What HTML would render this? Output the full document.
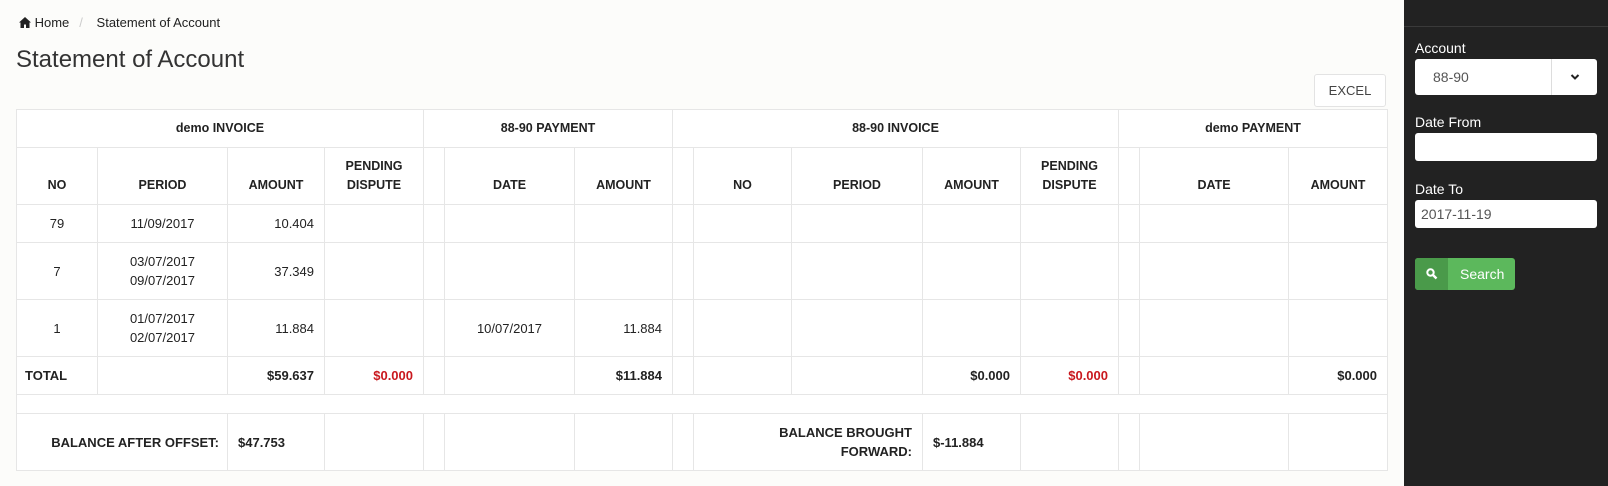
<!DOCTYPE html>
<html><head><meta charset="utf-8"><style>
body{margin:0;width:1608px;height:486px;background:#fcfcfa;font-family:"Liberation Sans",Arial,sans-serif;color:#333;position:relative;overflow:hidden;font-size:13px}
.bc{position:absolute;left:19px;top:15px;font-size:13px;color:#222}
.bc .sep{color:#ccc;margin:0 10px}
h1{position:absolute;left:16px;top:46px;margin:0;font-weight:normal;font-size:24px;color:#333}
.excel{position:absolute;left:1314px;top:74px;width:72px;height:33px;border:1px solid #e3e3e3;border-radius:3px;background:#fff;box-sizing:border-box;text-align:center;line-height:31px;font-size:13px;color:#444}
table{position:absolute;left:16px;top:109px;border-collapse:collapse;background:#fff;table-layout:fixed}
td{border:1px solid #e6e6e6;padding:0 10px;font-size:13px;line-height:19px;color:#222}
.h td{font-weight:bold;text-align:center;font-size:12.5px}
.c{text-align:center}.r{text-align:right}.b{font-weight:bold}.red{color:#c9181e}
.side{position:absolute;left:1404px;top:0;width:204px;height:486px;background:#222}
.side .line{position:absolute;left:0;right:0;top:26px;border-top:1px solid #3a3a3a}
.lab{position:absolute;left:11px;color:#fff;font-size:14px}
.inp{position:absolute;left:11px;width:182px;background:#fff;border-radius:3px;box-sizing:border-box;color:#555;font-size:14px}
</style></head><body>
<div class="bc"><svg width="12" height="11" viewBox="0 0 12 11" style="vertical-align:-1px"><path d="M6 0L0 5.5h1.5V11h3.5V7.5h2V11h3.5V5.5H12z" fill="#222"/></svg> Home<span class="sep">/</span> Statement of Account</div>
<h1>Statement of Account</h1>
<div class="excel">EXCEL</div>
<table>
<colgroup><col style="width:81px"><col style="width:130px"><col style="width:97px"><col style="width:99px"><col style="width:20px"><col style="width:130px"><col style="width:98px"><col style="width:21px"><col style="width:98px"><col style="width:131px"><col style="width:98px"><col style="width:98px"><col style="width:20px"><col style="width:149px"><col style="width:99px"></colgroup>
<tr class="h" style="height:38px"><td colspan="4">demo INVOICE</td><td colspan="3">88-90 PAYMENT</td><td colspan="5">88-90 INVOICE</td><td colspan="3">demo PAYMENT</td></tr>
<tr class="h" style="height:57px"><td style="vertical-align:bottom;padding-bottom:9px">NO</td><td style="vertical-align:bottom;padding-bottom:9px">PERIOD</td><td style="vertical-align:bottom;padding-bottom:9px">AMOUNT</td><td style="vertical-align:bottom;padding-bottom:9px">PENDING DISPUTE</td><td></td><td style="vertical-align:bottom;padding-bottom:9px">DATE</td><td style="vertical-align:bottom;padding-bottom:9px">AMOUNT</td><td></td><td style="vertical-align:bottom;padding-bottom:9px">NO</td><td style="vertical-align:bottom;padding-bottom:9px">PERIOD</td><td style="vertical-align:bottom;padding-bottom:9px">AMOUNT</td><td style="vertical-align:bottom;padding-bottom:9px">PENDING DISPUTE</td><td></td><td style="vertical-align:bottom;padding-bottom:9px">DATE</td><td style="vertical-align:bottom;padding-bottom:9px">AMOUNT</td></tr>
<tr style="height:38px"><td class="c">79</td><td class="c">11/09/2017</td><td class="r">10.404</td><td></td><td></td><td></td><td></td><td></td><td></td><td></td><td></td><td></td><td></td><td></td><td></td></tr>
<tr style="height:57px"><td class="c">7</td><td class="c">03/07/2017<br>09/07/2017</td><td class="r">37.349</td><td></td><td></td><td></td><td></td><td></td><td></td><td></td><td></td><td></td><td></td><td></td><td></td></tr>
<tr style="height:57px"><td class="c">1</td><td class="c">01/07/2017<br>02/07/2017</td><td class="r">11.884</td><td></td><td></td><td class="c">10/07/2017</td><td class="r">11.884</td><td></td><td></td><td></td><td></td><td></td><td></td><td></td><td></td></tr>
<tr style="height:38px" class="b"><td style="padding-left:8px">TOTAL</td><td></td><td class="r">$59.637</td><td class="r red">$0.000</td><td></td><td></td><td class="r">$11.884</td><td></td><td></td><td></td><td class="r">$0.000</td><td class="r red">$0.000</td><td></td><td></td><td class="r">$0.000</td></tr>
<tr style="height:19px"><td colspan="15"></td></tr>
<tr style="height:57px" class="b"><td colspan="2" class="r" style="padding-right:8px">BALANCE AFTER OFFSET:</td><td>$47.753</td><td></td><td></td><td></td><td></td><td></td><td colspan="2" class="r">BALANCE BROUGHT<br>FORWARD:</td><td>$-11.884</td><td></td><td></td><td></td><td></td></tr>
</table>
<div class="side"><div class="line"></div>
<div class="lab" style="top:40px">Account</div>
<div class="inp" style="top:59px;height:36px;line-height:36px;padding-left:18px">88-90<div style="position:absolute;right:0;top:0;width:45px;height:36px;border-left:1px solid #ddd"><svg width="10" height="8" viewBox="0 0 10 8" style="position:absolute;left:18px;top:14px"><path d="M1.5 2l3.5 3.5L8.5 2" stroke="#222" stroke-width="2" fill="none"/></svg></div></div>
<div class="lab" style="top:114px">Date From</div>
<div class="inp" style="top:133px;height:28px"></div>
<div class="lab" style="top:181px">Date To</div>
<div class="inp" style="top:200px;height:28px;line-height:28px;padding-left:6px">2017-11-19</div>
<div style="position:absolute;left:11px;top:258px;width:100px;height:32px;border-radius:3px;background:#5cb85c;overflow:hidden"><div style="position:absolute;left:0;top:0;width:33px;height:32px;background:#4a9a4a"><svg width="12" height="12" viewBox="0 0 12 12" style="position:absolute;left:11px;top:10px"><circle cx="4.5" cy="4.5" r="3.2" stroke="#fff" stroke-width="2" fill="none"/><path d="M7 7l3.5 3.5" stroke="#fff" stroke-width="2.4"/></svg></div><span style="position:absolute;left:45px;top:8px;color:#fff;font-size:14px">Search</span></div>
</div>
</body></html>
